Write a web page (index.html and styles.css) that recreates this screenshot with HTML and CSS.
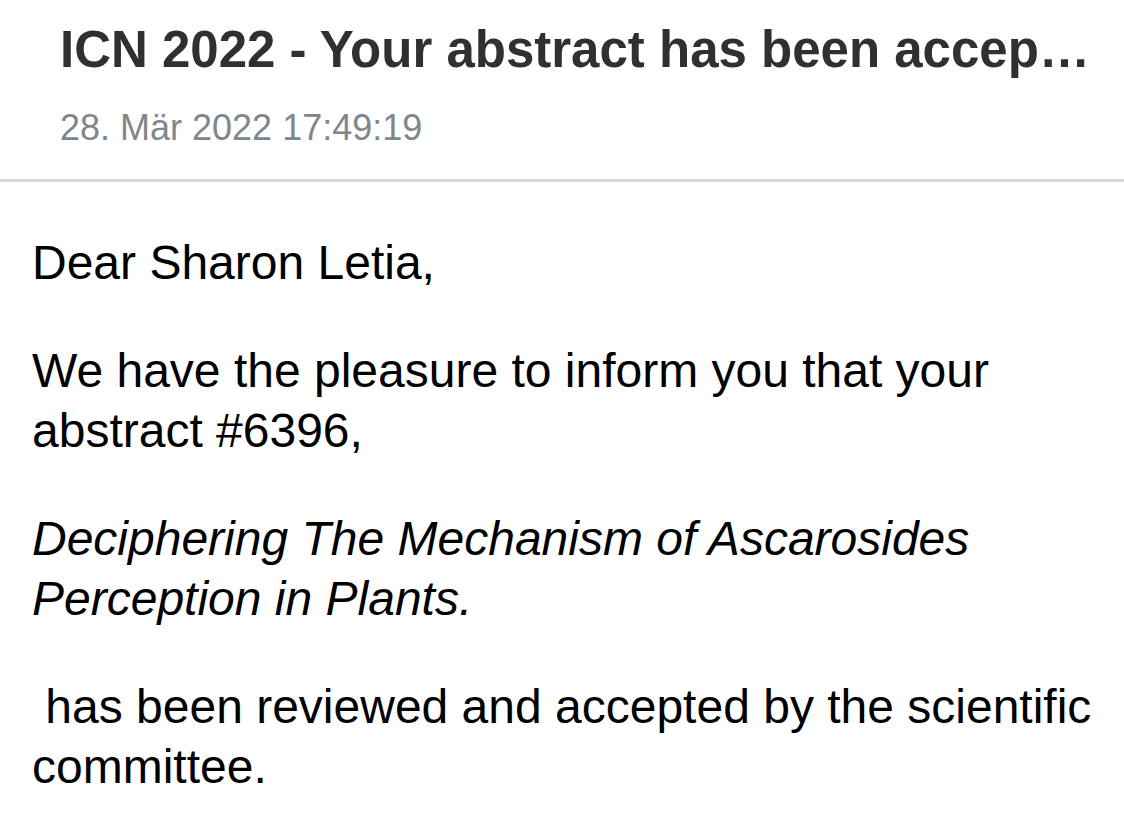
FILE: index.html
```html
<!DOCTYPE html>
<html lang="en">
<head>
<meta charset="utf-8">
<title>ICN 2022 - Your abstract has been accepted</title>
<link rel="stylesheet" href="styles.css">
</head>
<body>
<div class="mail">
  <header class="mail-header">
    <h1 class="subject">ICN 2022 - Your abstract has been accepted</h1>
    <div class="date">28. Mär 2022 17:49:19</div>
  </header>
  <main class="mail-body">
    <p>Dear Sharon Letia,</p>
    <p>We have the pleasure to inform you that your abstract #6396,</p>
    <p><em>Deciphering The Mechanism of Ascarosides Perception in Plants.</em></p>
    <p>&nbsp;has been reviewed and accepted by the scientific committee.</p>
  </main>
</div>
</body>
</html>
```

FILE: styles.css
```css
html, body {
  margin: 0;
  padding: 0;
  background: #ffffff;
}

body {
  font-family: "Liberation Sans", Arial, Helvetica, sans-serif;
  width: 1124px;
  height: 827px;
  overflow: hidden;
}

.mail-header {
  padding: 20px 30px 29px 60px;
  border-bottom: 3px solid #d6dadd;
}

.subject {
  margin: 0;
  font-size: 51px;
  line-height: 60px;
  font-weight: bold;
  color: #303030;
  white-space: nowrap;
  overflow: hidden;
  text-overflow: ellipsis;
}

.date {
  margin-top: 26px;
  font-size: 36px;
  line-height: 44px;
  color: #80868b;
}

.mail-body {
  padding: 3px 30px 0 32px;
  font-size: 48px;
  line-height: 60px;
  color: #000000;
}

.mail-body p {
  margin: 48px 0 0 0;
}
```
